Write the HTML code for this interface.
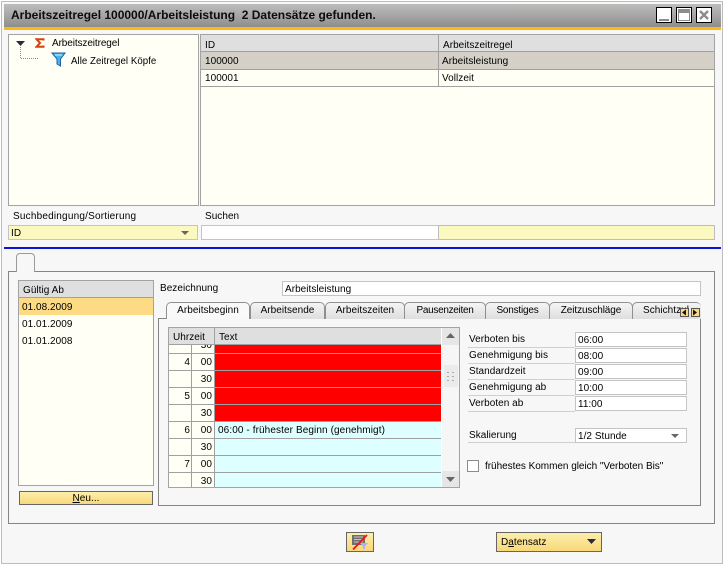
<!DOCTYPE html>
<html><head><meta charset="utf-8"><style>
html,body{margin:0;padding:0;background:#fff}
#w{position:relative;width:725px;height:565px;overflow:hidden;background:#fff;font:10px "Liberation Sans",sans-serif;color:#000;letter-spacing:.04px}
#w div,#w svg{position:absolute;box-sizing:border-box}
.t{white-space:nowrap;line-height:16px;height:16px}
.b{border:1px solid #a3a3a3}
.i{background:#fff;border:1px solid #c4c4c4;padding-left:2px;line-height:15px;white-space:nowrap}
.tab{height:17px;border:1px solid #8f8f8f;border-bottom:none;border-radius:5px 5px 0 0;background:linear-gradient(#f5f5f5,#dfdddf);text-align:center;line-height:15px;white-space:nowrap;overflow:hidden}
.l{left:468px;width:107px;border-bottom:1px solid #d0d0d0;height:15px;line-height:13px;padding-left:1px;white-space:nowrap}
</style></head><body><div id="w">

<div style="left:1px;top:1px;width:722px;height:563px;border:1px solid #bdbdbd;background:#f7f7f7"></div>
<div style="left:4px;top:4px;width:717px;height:23px;background:linear-gradient(#bdbdbd,#8e8f8c)"></div>
<div style="left:4px;top:27px;width:717px;height:3px;background:#fdb913"></div>
<div style="left:11px;top:8px;height:14px;line-height:14px;white-space:nowrap;font-weight:bold;font-size:12px;color:#0c0c0c;letter-spacing:0">Arbeitszeitregel 100000/Arbeitsleistung&nbsp; 2 Datensätze gefunden.</div>

<div style="left:656px;top:7px;width:16px;height:16px;background:#fff;border:1px solid #000"></div>
<div style="left:659px;top:19px;width:10px;height:2px;background:#8c8c8c"></div>
<div style="left:676px;top:7px;width:16px;height:16px;background:#fff;border:1px solid #000"></div>
<div style="left:678px;top:9px;width:12px;height:12px;border:1px solid #8c8c8c;border-top:4px solid #8c8c8c"></div>
<div style="left:696px;top:7px;width:16px;height:16px;background:#fff;border:1px solid #000"></div>
<svg style="left:699px;top:10px" width="10" height="10"><path d="M1 1L9 9M9 1L1 9" stroke="#8c8c8c" stroke-width="2.4"/></svg>

<div class="b" style="left:8px;top:34px;width:191px;height:172px;background:#fffff6"></div>
<svg style="left:15px;top:38px" width="50" height="28">
<path d="M1 3H10L5.500 8Z" fill="#2b2b3a"/>
<path d="M5.500 9V20.500H24" stroke="#8a8a8a" stroke-dasharray="1 1" fill="none"/>
</svg>
<svg style="left:35px;top:38px" width="10" height="10"><path d="M8.500 2.500V1.200H1.500L5 5L1.500 8.800H8.500V7.500" stroke="#d8400c" stroke-width="2" fill="none"/></svg>
<svg style="left:51px;top:52px" width="16" height="15"><path d="M1 1H14L9.500 7V14L6 12V7Z" fill="#46b4ea" stroke="#1c5f9c"/><path d="M4 3H11" stroke="#d8f0fb"/></svg>
<div class="t" style="left:52px;top:36px;letter-spacing:-.1px">Arbeitszeitregel</div>
<div class="t" style="left:71px;top:54px;font-size:9.700px">Alle Zeitregel Köpfe</div>

<div class="b" style="left:200px;top:34px;width:515px;height:172px;background:#fffff6"></div>
<div style="left:201px;top:35px;width:513px;height:17px;background:#dfdfdf;border-bottom:1px solid #a0a0a0"></div>
<div style="left:201px;top:52px;width:513px;height:18px;background:#d4d0c8;border-bottom:1px solid #a0a0a0"></div>
<div style="left:201px;top:70px;width:513px;height:17px;border-bottom:1px solid #a0a0a0"></div>
<div style="left:438px;top:35px;width:1px;height:52px;background:#a0a0a0"></div>
<div class="t" style="left:205px;top:38px">ID</div>
<div class="t" style="left:443px;top:38px">Arbeitszeitregel</div>
<div class="t" style="left:205px;top:54px">100000</div>
<div class="t" style="left:442px;top:54px">Arbeitsleistung</div>
<div class="t" style="left:205px;top:71px">100001</div>
<div class="t" style="left:442px;top:71px">Vollzeit</div>

<div class="t" style="left:13px;top:209px;letter-spacing:.2px">Suchbedingung/Sortierung</div>
<div class="t" style="left:205px;top:209px">Suchen</div>
<div style="left:8px;top:225px;width:190px;height:15px;background:#fbf8c0;border:1px solid #c4c4c4;line-height:15px;padding-left:2px">ID</div>
<svg style="left:180px;top:230px" width="10" height="6"><path d="M1 1H9L5 5Z" fill="#666"/></svg>
<div style="left:201px;top:225px;width:238px;height:15px;background:#fff;border:1px solid #c4c4c4"></div>
<div style="left:438px;top:225px;width:277px;height:15px;background:#fbf8c0;border:1px solid #bdbdbd"></div>
<div style="left:4px;top:247px;width:717px;height:2px;background:#0a14d2"></div>

<div style="left:8px;top:271px;width:707px;height:253px;border:1px solid #858585"></div>
<div style="left:16px;top:253px;width:19px;height:19px;background:#f7f7f7;border:1px solid #9a9a9a;border-bottom:none;border-radius:4px 4px 0 0"></div>

<div class="b" style="left:18px;top:280px;width:136px;height:206px;background:#fffff6"></div>
<div style="left:19px;top:281px;width:134px;height:17px;background:#dfdfdf;border-bottom:1px solid #a0a0a0"></div>
<div style="left:19px;top:298px;width:134px;height:17px;background:#fddb84"></div>
<div class="t" style="left:23px;top:283px">Gültig Ab</div>
<div class="t" style="left:22px;top:300px">01.08.2009</div>
<div class="t" style="left:22px;top:317px">01.01.2009</div>
<div class="t" style="left:22px;top:334px">01.01.2008</div>
<div style="left:19px;top:491px;width:134px;height:14px;border:1px solid #666;background:linear-gradient(#fdeead,#f8d878);text-align:center;line-height:14px"><u>N</u>eu...</div>

<div class="t" style="left:160px;top:281px">Bezeichnung</div>
<div class="i" style="left:282px;top:281px;width:419px;height:15px">Arbeitsleistung</div>

<div style="left:158px;top:318px;width:543px;height:188px;border:1px solid #858585"></div>
<div class="tab" style="left:166px;top:302px;width:84px;background:#f9f9f9;height:17px;z-index:2">Arbeitsbeginn</div>
<div class="tab" style="left:250px;top:302px;width:75px">Arbeitsende</div>
<div class="tab" style="left:325px;top:302px;width:80px">Arbeitszeiten</div>
<div class="tab" style="left:404px;top:302px;width:82px;letter-spacing:-.3px">Pausenzeiten</div>
<div class="tab" style="left:485px;top:302px;width:65px;letter-spacing:-.2px">Sonstiges</div>
<div class="tab" style="left:549px;top:302px;width:84px;letter-spacing:-.1px">Zeitzuschläge</div>
<div class="tab" style="left:632px;top:302px;width:69px;text-align:left;padding-left:10px;border-right:none">Schichtzul</div>
<div style="left:680px;top:308px;width:9px;height:9px;background:#f9da7c;border:1px solid #555"></div>
<svg style="left:682px;top:309px" width="5" height="7"><path d="M4 0.500V6.500L0 3.500Z" fill="#111"/></svg>
<div style="left:691px;top:308px;width:9px;height:9px;background:#f9da7c;border:1px solid #555"></div>
<svg style="left:693px;top:309px" width="5" height="7"><path d="M0 0.500V6.500L4 3.500Z" fill="#111"/></svg>

<div style="left:168px;top:327px;width:292px;height:161px;border:1px solid #a3a3a3;background:#fffff6"></div>
<div style="left:169px;top:328px;width:272px;height:17px;background:#dfdfdf;border-bottom:1px solid #a0a0a0"></div>
<div style="left:214px;top:345px;width:227px;height:76px;background:#f00"></div>
<div style="left:214px;top:421px;width:227px;height:66px;background:#dff"></div>
<div style="left:169px;top:353px;width:272px;height:1px;background:#a0a0a0"></div>
<div style="left:169px;top:370px;width:272px;height:1px;background:#a0a0a0"></div>
<div style="left:169px;top:387px;width:272px;height:1px;background:#a0a0a0"></div>
<div style="left:169px;top:404px;width:272px;height:1px;background:#a0a0a0"></div>
<div style="left:169px;top:421px;width:272px;height:1px;background:#a0a0a0"></div>
<div style="left:169px;top:438px;width:272px;height:1px;background:#a0a0a0"></div>
<div style="left:169px;top:455px;width:272px;height:1px;background:#a0a0a0"></div>
<div style="left:169px;top:472px;width:272px;height:1px;background:#a0a0a0"></div>
<div style="left:191px;top:345px;width:1px;height:142px;background:#a0a0a0"></div>
<div style="left:214px;top:328px;width:1px;height:159px;background:#a0a0a0"></div>
<div class="t" style="left:173px;top:330px">Uhrzeit</div>
<div class="t" style="left:219px;top:330px">Text</div>
<div style="left:192px;top:345px;width:22px;height:8px;overflow:hidden"><div class="t" style="right:2px;top:-7px">30</div></div>
<div class="t" style="left:169px;top:355px;width:21px;text-align:right">4</div><div class="t" style="left:192px;top:355px;width:20px;text-align:right">00</div>
<div class="t" style="left:192px;top:372px;width:20px;text-align:right">30</div>
<div class="t" style="left:169px;top:389px;width:21px;text-align:right">5</div><div class="t" style="left:192px;top:389px;width:20px;text-align:right">00</div>
<div class="t" style="left:192px;top:406px;width:20px;text-align:right">30</div>
<div class="t" style="left:169px;top:423px;width:21px;text-align:right">6</div><div class="t" style="left:192px;top:423px;width:20px;text-align:right">00</div>
<div class="t" style="left:218px;top:423px;letter-spacing:.1px">06:00 - frühester Beginn (genehmigt)</div>
<div class="t" style="left:192px;top:440px;width:20px;text-align:right">30</div>
<div class="t" style="left:169px;top:457px;width:21px;text-align:right">7</div><div class="t" style="left:192px;top:457px;width:20px;text-align:right">00</div>
<div class="t" style="left:192px;top:474px;width:20px;text-align:right">30</div>

<div style="left:442px;top:328px;width:17px;height:159px;background:#f6f6f6"></div>
<div style="left:442px;top:328px;width:17px;height:17px;background:#e6e6e6"></div>
<div style="left:442px;top:471px;width:17px;height:16px;background:#e6e6e6"></div>
<div style="left:444px;top:365px;width:14px;height:22px;background:#ebebeb"></div>
<svg style="left:445px;top:332px" width="11" height="7"><path d="M1 6H10L5.500 1Z" fill="#666"/></svg>
<svg style="left:445px;top:476px" width="11" height="7"><path d="M1 1H10L5.500 6Z" fill="#666"/></svg>
<svg style="left:446px;top:371px" width="9" height="11"><path d="M1 1h2v1H1zM6 1h2v1H6zM1 5h2v1H1zM6 5h2v1H6zM1 9h2v1H1zM6 9h2v1H6z" fill="#aaa"/></svg>

<div class="l" style="top:333px">Verboten bis</div><div class="i" style="left:575px;top:332px;width:112px;height:15px">06:00</div>
<div class="l" style="top:349px">Genehmigung bis</div><div class="i" style="left:575px;top:348px;width:112px;height:15px">08:00</div>
<div class="l" style="top:365px">Standardzeit</div><div class="i" style="left:575px;top:364px;width:112px;height:15px">09:00</div>
<div class="l" style="top:381px">Genehmigung ab</div><div class="i" style="left:575px;top:380px;width:112px;height:15px">10:00</div>
<div class="l" style="top:397px">Verboten ab</div><div class="i" style="left:575px;top:396px;width:112px;height:15px">11:00</div>
<div class="l" style="top:428px;height:15px;line-height:15px">Skalierung</div><div class="i" style="left:575px;top:428px;width:112px;height:15px">1/2 Stunde</div>
<svg style="left:670px;top:433px" width="10" height="6"><path d="M1 1H9L5 5Z" fill="#666"/></svg>
<div style="left:467px;top:460px;width:12px;height:12px;background:#fff;border:1px solid #8c8c8c"></div>
<div class="t" style="left:485px;top:459px;letter-spacing:-.03px">frühestes Kommen gleich "Verboten Bis"</div>

<div style="left:346px;top:532px;width:28px;height:20px;border:1px solid #666;background:linear-gradient(#fdeead,#f8d878)"></div>
<svg style="left:351px;top:534px" width="18" height="16"><path d="M1 1H14V11H1Z" fill="#6f6f6f"/><path d="M3 3H12M3 5.500H12M3 8H12" stroke="#c4c4c4"/><path d="M9 9H17L14 12.500V15.500L12 14.500V12.500Z" fill="#b0b0ee"/><path d="M2 15.500L16 1" stroke="#ee1515" stroke-width="1.800"/></svg>
<div style="left:496px;top:532px;width:106px;height:20px;border:1px solid #666;background:linear-gradient(#fdeead,#f8d878);line-height:20px;padding-left:4px">D<u>a</u>tensatz</div>
<svg style="left:586px;top:539px" width="11" height="6"><path d="M1 0H10L5.500 5Z" fill="#2a2a3a"/></svg>
</div></body></html>
